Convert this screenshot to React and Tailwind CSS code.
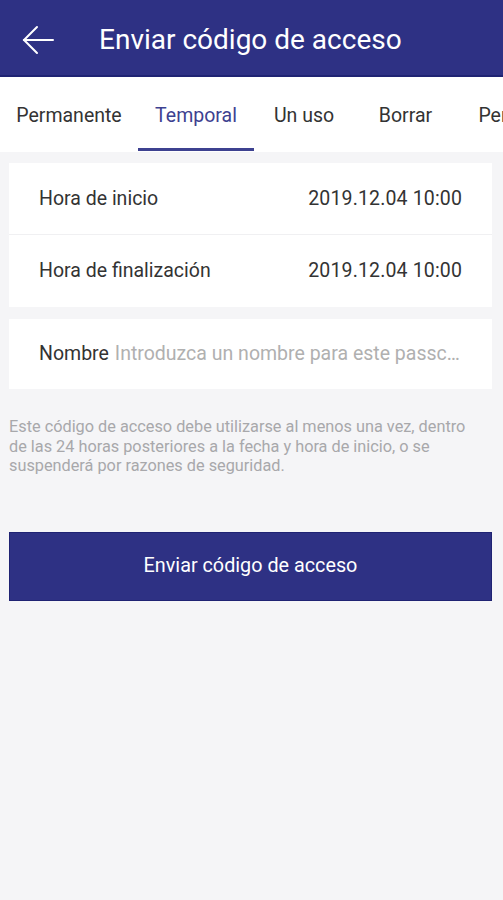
const TABS = [
  { label: 'Permanente', w: 'w-[138px]' },
  { label: 'Temporal', w: 'w-[116px]', active: true },
  { label: 'Un uso', w: 'w-[100px]' },
  { label: 'Borrar', w: 'w-[103px]' },
  { label: 'Período', w: 'w-[110px]' },
];

function BackArrow() {
  return (
    <svg width="34" height="32" viewBox="0 0 34 32" fill="none" stroke="white" strokeWidth="2" strokeLinecap="round">
      <path d="M3 16h29" />
      <path d="M16 3L3 16l13 13" />
    </svg>
  );
}

function Row({ label, value, last }) {
  return (
    <div className={`flex h-[72px] items-center justify-between px-[30px] ${last ? '' : 'border-b border-[#f0f0f2]'}`}>
      <span className="text-[19.5px] text-[#333]">{label}</span>
      <span className="text-[19.5px] tracking-[0.15px] text-[#333]">{value}</span>
    </div>
  );
}

export default function App() {
  return (
    <div className="min-h-[900px] w-[503px] bg-[#f5f5f7] font-['Roboto',sans-serif]">
      <header className="flex h-[77px] items-center border-b-2 border-[#1f2373] bg-[#2e3184] pt-[4px]">
        <div className="ml-[21px] mr-[44px] flex items-center">
          <BackArrow />
        </div>
        <h1 className="text-[28px] text-white">Enviar código de acceso</h1>
      </header>

      <nav className="flex h-[75px] overflow-hidden bg-white pt-[3px]">
        {TABS.map(({ label, w, active }) => (
          <div key={label} className={`relative flex shrink-0 items-center justify-center ${w}`}>
            <span className={`whitespace-nowrap text-[19.5px] ${active ? 'text-[#3d4190]' : 'text-[#333]'}`}>
              {label}
            </span>
            {active && <div className="absolute bottom-[1px] left-0 right-0 h-[3px] bg-[#3d4190]" />}
          </div>
        ))}
      </nav>

      <div className="pl-[9px] pr-[11px] pt-[11px]">
        <div className="bg-white">
          <Row label="Hora de inicio" value="2019.12.04 10:00" />
          <Row label="Hora de finalización" value="2019.12.04 10:00" last />
        </div>

        <div className="mt-[12px] flex h-[70px] items-center bg-white px-[30px]">
          <span className="shrink-0 text-[19.5px] text-[#333]">Nombre</span>
          <span className="ml-[6px] truncate text-[19.5px] text-[#b0b0b0]">
            Introduzca un nombre para este passcode
          </span>
        </div>

        <p className="mt-[28px] pr-[6px] text-[16.3px] leading-[19.5px] text-[#a8a8ab]">
          Este código de acceso debe utilizarse al menos una vez, dentro de las 24 horas posteriores a la fecha y hora de inicio, o se suspenderá por razones de seguridad.
        </p>

        <button className="mt-[56px] flex h-[69px] w-full items-center justify-center border border-[#1f2373] bg-[#2e3184] text-[19.8px] text-white">
          Enviar código de acceso
        </button>
      </div>
    </div>
  );
}
